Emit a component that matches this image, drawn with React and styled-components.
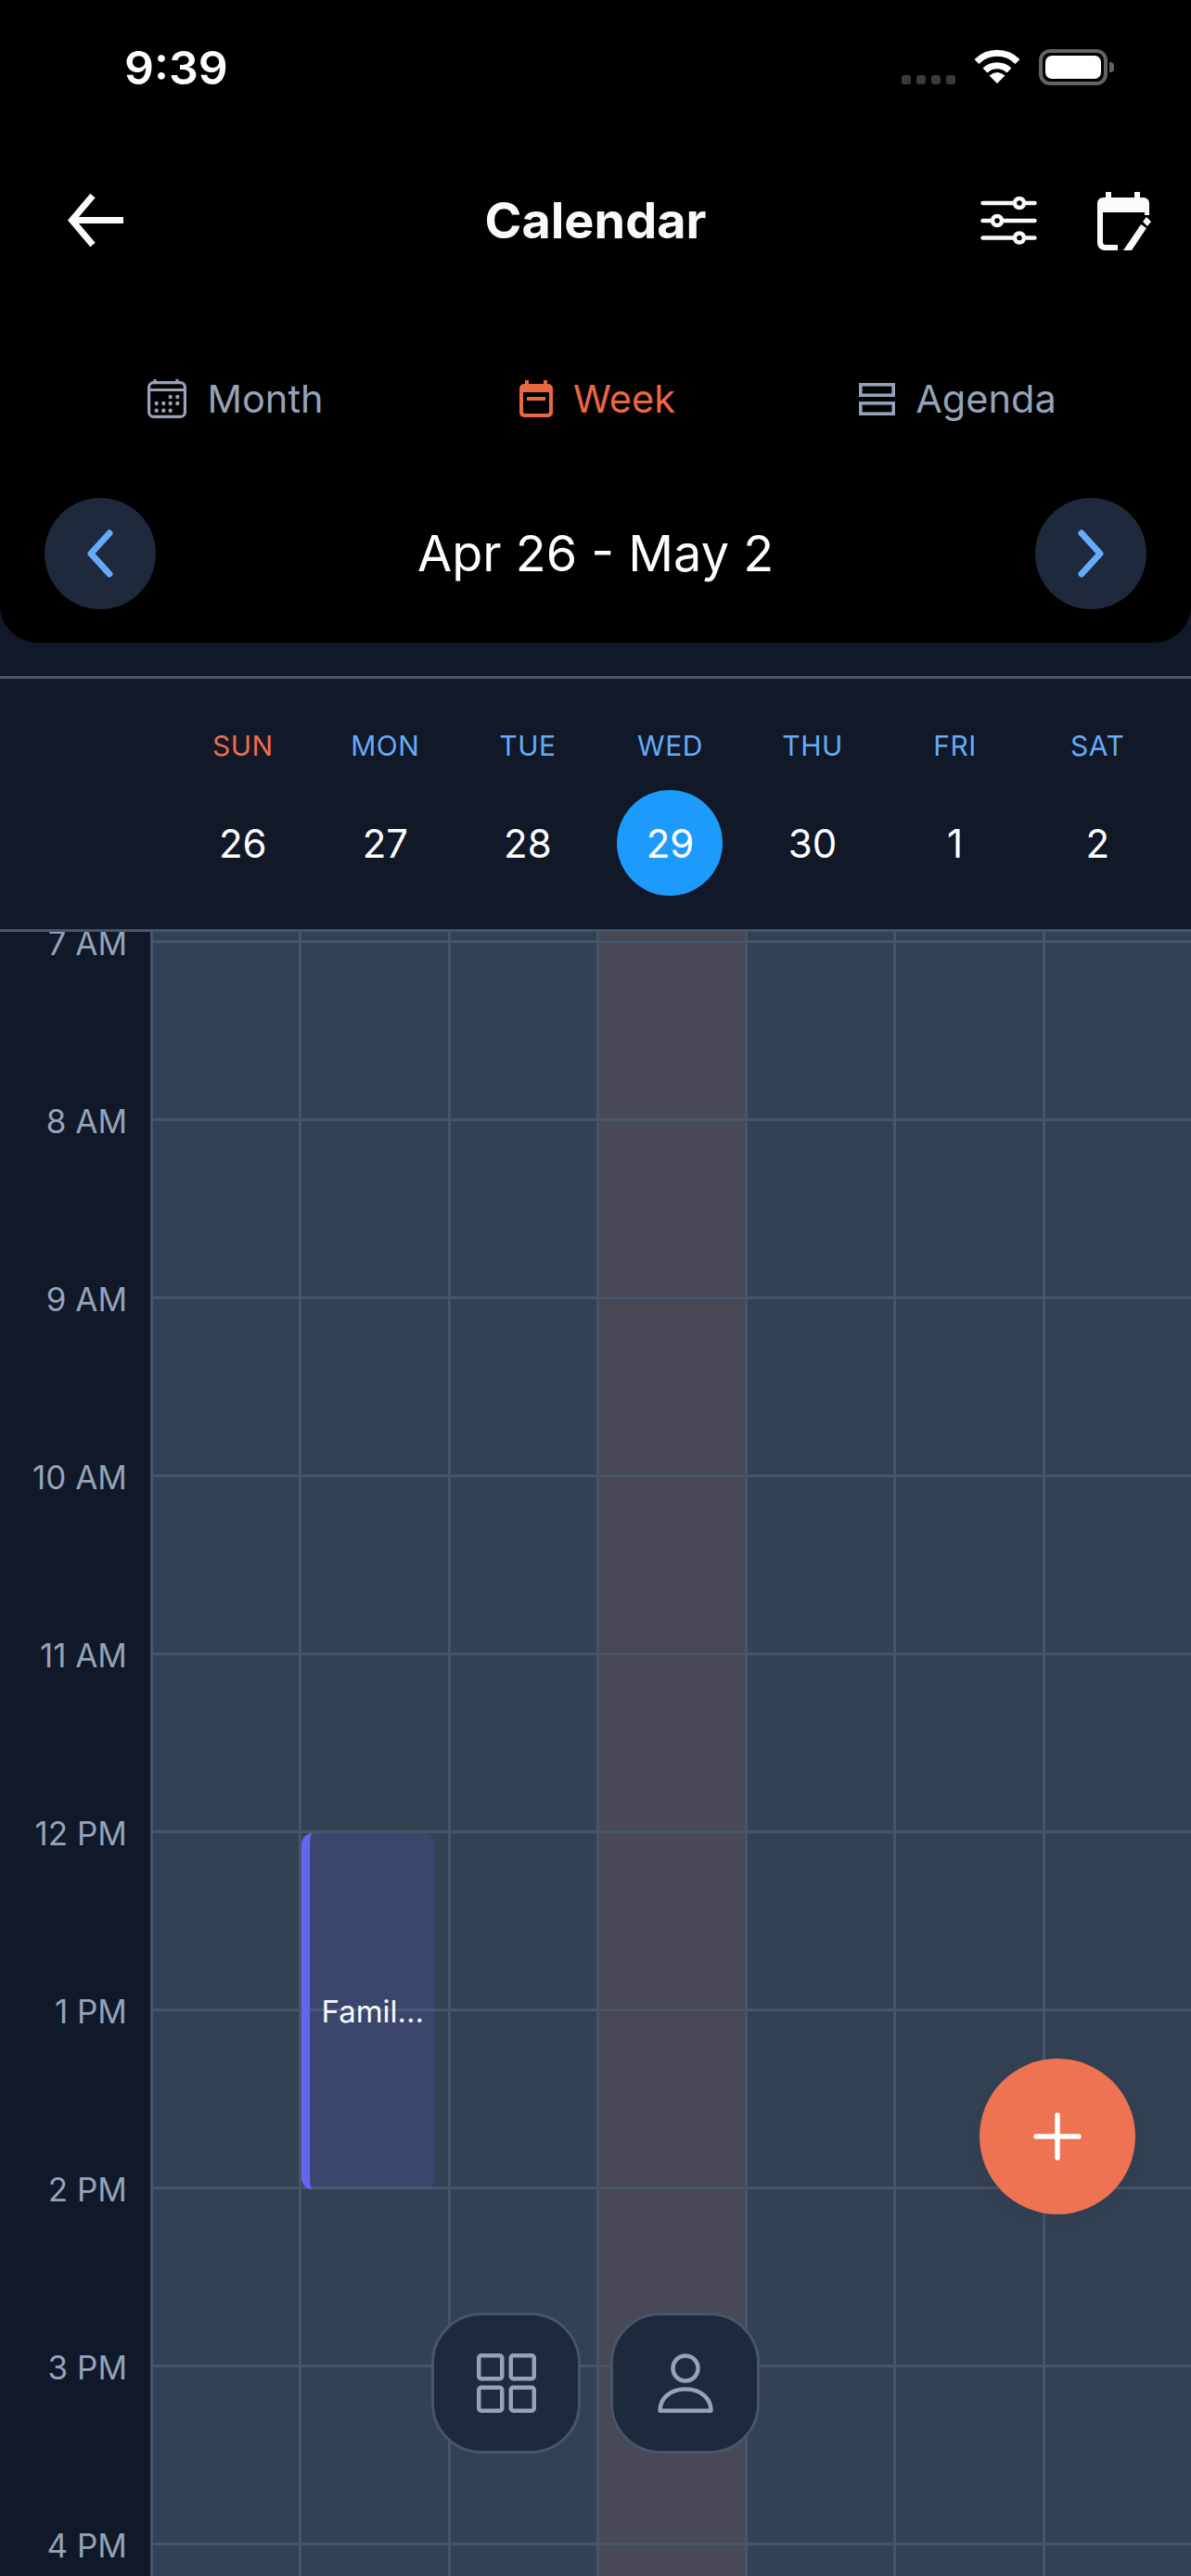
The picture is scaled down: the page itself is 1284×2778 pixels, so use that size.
import React from "react";
import styled, { createGlobalStyle } from "styled-components";

const Global = createGlobalStyle`
  html, body { margin: 0; padding: 0; background: #111827; }
  body { font-family: Inter, "Noto Sans", sans-serif; -webkit-font-smoothing: antialiased; }
  * { box-sizing: border-box; }
`;

const Page = styled.div`
  position: relative;
  width: 1284px;
  height: 2778px;
  overflow: hidden;
  display: flex;
  flex-direction: column;
  background: #111827;
`;

const Header = styled.header`
  background: #000;
  border-radius: 0 0 40px 40px;
  padding-bottom: 36px;
  flex: none;
`;

const StatusBar = styled.div`
  height: 146px;
  display: flex;
  justify-content: space-between;
  padding: 0 90px 0 134px;
  align-items: flex-start;
`;

const Clock = styled.span`
  margin-top: 44px;
  font-size: 50px;
  line-height: 58px;
  font-weight: 600;
  color: #fff;
`;

const StatusIcons = styled.div`
  margin-top: 53px;
  display: flex;
  align-items: flex-start;
`;

const SignalDots = styled.div`
  display: flex;
  gap: 6px;
  margin: 28px 20px 0 0;
`;

const SignalDot = styled.i`
  display: block;
  width: 10px;
  height: 10px;
  border-radius: 3px;
  background: #3a3a3c;
`;

const Battery = styled.div`
  position: relative;
  width: 74px;
  height: 39px;
  margin-left: 20px;
  border: 4px solid #636366;
  border-radius: 12px;
  padding: 3px;
  &::after {
    content: "";
    position: absolute;
    right: -11px;
    top: 10px;
    width: 5px;
    height: 11px;
    border-radius: 0 4px 4px 0;
    background: #636366;
  }
`;

const BatteryFill = styled.div`
  width: 100%;
  height: 100%;
  border-radius: 7px;
  background: #fff;
`;

const NavBar = styled.nav`
  margin-top: 46px;
  height: 92px;
  display: grid;
  grid-template-columns: 1fr auto 1fr;
  align-items: center;
  padding: 0 43px;
`;

const BackButton = styled.div`
  padding-left: 30px;
`;

const Title = styled.h1`
  margin: 0;
  font-size: 54px;
  line-height: 64px;
  font-weight: 700;
  color: #f8fafc;
`;

const NavActions = styled.div`
  display: flex;
  justify-content: flex-end;
  align-items: center;
  gap: 65px;
`;

const Tabs = styled.div`
  margin-top: 101px;
  height: 90px;
  display: grid;
  grid-template-columns: 390px 390px 387px;
  padding-left: 59px;
`;

const Tab = styled.div`
  display: flex;
  align-items: center;
  justify-content: center;
  gap: 22px;
  font-size: 41.5px;
  color: ${(p) => (p.$active ? "#ea6840" : "#94a3b8")};
`;

const DateRow = styled.div`
  margin-top: 62px;
  display: flex;
  align-items: center;
  justify-content: space-between;
  padding: 0 48px;
`;

const RoundButton = styled.button`
  width: 120px;
  height: 120px;
  border: 0;
  padding: 0;
  border-radius: 50%;
  background: #1e293b;
  display: flex;
  align-items: center;
  justify-content: center;
`;

const DateLabel = styled.span`
  font-size: 54px;
  line-height: 64px;
  color: #fff;
`;

const Divider = styled.div`
  flex: none;
  height: 3px;
  margin-top: 36px;
  background: #475569;
`;

const DayHeader = styled.div`
  flex: none;
  display: grid;
  grid-template-columns: repeat(7, 1fr);
  padding: 50px 24px 36px 185px;
  border-bottom: 3px solid #475569;
`;

const DayCell = styled.div`
  display: flex;
  flex-direction: column;
  align-items: center;
  gap: 26px;
`;

const WeekDay = styled.span`
  font-size: 30px;
  line-height: 44px;
  letter-spacing: 0.5px;
  color: ${(p) => (p.$sunday ? "#ee6c4d" : "#66abf7")};
`;

const DayNumber = styled.span`
  width: 114px;
  height: 114px;
  border-radius: 50%;
  display: flex;
  align-items: center;
  justify-content: center;
  font-size: 42px;
  color: #fff;
  background: ${(p) => (p.$today ? "#1d9bfd" : "transparent")};
`;

const Schedule = styled.div`
  flex: 1;
  min-height: 0;
  overflow: hidden;
  display: grid;
  grid-template-columns: 162px repeat(7, 1fr);
`;

const TimeGutter = styled.div`
  margin-top: -84px;
  display: flex;
  flex-direction: column;
`;

const TimeLabel = styled.div`
  flex: none;
  height: 192px;
  display: flex;
  align-items: center;
  justify-content: flex-end;
  padding-right: 25px;
  font-size: 35px;
  color: #94a3b8;
`;

const DayColumn = styled.div`
  position: relative;
  display: flex;
  flex-direction: column;
  padding-top: 9px;
  border-left: 3px solid #475569;
  background: ${(p) => (p.$today ? "#494856" : "#334155")};
`;

const HourCell = styled.div`
  flex: none;
  height: 192px;
  border-top: 3px solid #475569;
`;

const EventCard = styled.div`
  position: absolute;
  left: 0;
  top: 972px;
  width: 144px;
  height: 384px;
  border-left: 9px solid #6366f1;
  border-radius: 12px;
  background: rgba(99, 102, 241, 0.15);
  display: flex;
  align-items: center;
  justify-content: center;
  font-size: 33px;
  color: #f8fafc;
`;

const Fab = styled.button`
  position: absolute;
  left: 1056px;
  top: 2220px;
  width: 168px;
  height: 168px;
  border: 0;
  padding: 0;
  border-radius: 50%;
  background: #ed7352;
  box-shadow: 0 6px 24px rgba(17, 24, 39, 0.08);
  display: flex;
  align-items: center;
  justify-content: center;
`;

const BottomDock = styled.div`
  position: absolute;
  left: 0;
  right: 0;
  top: 2494px;
  display: flex;
  justify-content: center;
  gap: 32px;
`;

const DockButton = styled.button`
  width: 161px;
  height: 152px;
  padding: 0;
  border: 3px solid #475569;
  border-radius: 54px;
  background: #1e293b;
  display: flex;
  align-items: center;
  justify-content: center;
`;

const Wifi = () => (
  <svg width="50" height="37" viewBox="0 0 50 37" fill="none" stroke="#fff" strokeWidth="7">
    <path d="M3 13.5A31 31 0 0 1 47 13.5" />
    <path d="M12 23A18.500 18.500 0 0 1 38 23" />
    <path d="M25 37L16.500 28.500Q25 21.500 33.500 28.500Z" fill="#fff" stroke="none" />
  </svg>
);

const BackIcon = () => (
  <svg width="60" height="60" viewBox="0 0 60 60" fill="none" stroke="#f8fafc" strokeWidth="7" style={{ display: "block" }}>
    <path d="M60 29.500H5" />
    <path d="M27 3L4.500 29.500L27 56" />
  </svg>
);

const SlidersIcon = () => (
  <svg width="61" height="52" viewBox="0 0 61 52" fill="none" stroke="#f8fafc" strokeWidth="4.500" strokeLinecap="round" style={{ display: "block" }}>
    <path d="M2.500 7H58.500M2.500 26H58.500M2.500 44.500H58.500" />
    <circle cx="42" cy="7" r="5" fill="#000" />
    <circle cx="18" cy="26" r="5" fill="#000" />
    <circle cx="42" cy="44.500" r="5" fill="#000" />
  </svg>
);

const CalendarEditIcon = () => (
  <svg width="58" height="63" viewBox="0 0 58 63" style={{ display: "block" }}>
    <path
      fill="#f8fafc"
      d="M9 0H15V6H40V0H46V6H50A6 6 0 0 1 56 12V25H51V22H6V54A3 3 0 0 0 9 57H22V63H8A8 8 0 0 1 0 55V12A6 6 0 0 1 6 6H9Z"
    />
    <path fill="#f8fafc" d="M28 63L47 35L53 39L37 63Z" />
    <path fill="#f8fafc" d="M49 32L53 27L58 32L54 37Z" />
  </svg>
);

const MonthIcon = () => (
  <svg width="42" height="42" viewBox="0 0 42 42" fill="none" stroke="#94a3b8" strokeWidth="3.200">
    <rect x="1.600" y="3.600" width="38.800" height="36.800" rx="5" />
    <path d="M8 0V4M32 0V4M2 11.500H40" />
    <g fill="#94a3b8" stroke="none">
      <circle cx="24.700" cy="19" r="2.200" />
      <circle cx="32.300" cy="19" r="2.200" />
      <circle cx="9.700" cy="26" r="2.200" />
      <circle cx="17.300" cy="26" r="2.200" />
      <circle cx="24.700" cy="26" r="2.200" />
      <circle cx="32.300" cy="26" r="2.200" />
      <circle cx="9.700" cy="33.700" r="2.200" />
      <circle cx="17.300" cy="33.700" r="2.200" />
      <circle cx="24.700" cy="33.700" r="2.200" />
    </g>
  </svg>
);

const WeekIcon = () => (
  <svg width="36" height="40" viewBox="0 0 36 40" fill="#ea6840">
    <rect x="6" y="0" width="4" height="6" />
    <rect x="26" y="0" width="4" height="6" />
    <path fillRule="evenodd" d="M5 4H31A5 5 0 0 1 36 9V35A5 5 0 0 1 31 40H5A5 5 0 0 1 0 35V9A5 5 0 0 1 5 4ZM4 13V34A2 2 0 0 0 6 36H30A2 2 0 0 0 32 34V13Z" />
    <rect x="8" y="18" width="20" height="4" />
  </svg>
);

const AgendaIcon = () => (
  <svg width="39" height="35" viewBox="0 0 39 35" fill="none" stroke="#94a3b8" strokeWidth="3.600">
    <rect x="1.800" y="1.800" width="35.400" height="11.400" />
    <rect x="1.800" y="21.800" width="35.400" height="11.400" />
  </svg>
);

const ChevronIcon = ({ flip }) => (
  <svg width="30" height="52" viewBox="0 0 30 52" fill="none" stroke="#66abfb" strokeWidth="7" strokeLinecap="round" strokeLinejoin="round" style={flip ? { transform: "scaleX(-1)" } : undefined}>
    <path d="M25 4L5 26L25 48" />
  </svg>
);

const PlusIcon = () => (
  <svg width="52" height="52" viewBox="0 0 52 52" fill="none" stroke="#fff" strokeWidth="5.500" strokeLinecap="round">
    <path d="M26 3V49M3 26H49" />
  </svg>
);

const GridIcon = () => (
  <svg width="64" height="64" viewBox="0 0 64 64" fill="none" stroke="#94a3b8" strokeWidth="4.500">
    <rect x="2.250" y="2.250" width="25" height="25" rx="2.500" />
    <rect x="36.750" y="2.250" width="25" height="25" rx="2.500" />
    <rect x="2.250" y="36.750" width="25" height="25" rx="2.500" />
    <rect x="36.750" y="36.750" width="25" height="25" rx="2.500" />
  </svg>
);

const PersonIcon = () => (
  <svg width="60" height="64" viewBox="0 0 60 64" fill="none" stroke="#94a3b8" strokeWidth="4.500" strokeLinejoin="round">
    <circle cx="30" cy="16" r="13.500" />
    <path d="M2.500 61.700C2.500 48 14 38.500 30 38.500C46 38.500 57.500 48 57.500 61.700Z" />
  </svg>
);

const HOURS = ["7 AM", "8 AM", "9 AM", "10 AM", "11 AM", "12 PM", "1 PM", "2 PM", "3 PM", "4 PM"];
const DAYS = [
  ["SUN", "26"],
  ["MON", "27"],
  ["TUE", "28"],
  ["WED", "29"],
  ["THU", "30"],
  ["FRI", "1"],
  ["SAT", "2"],
];
const ROWS = Array.from({ length: 10 });

export default function App() {
  return (
    <Page>
      <Global />
      <Header>
        <StatusBar>
          <Clock>9:39</Clock>
          <StatusIcons>
            <SignalDots>
              <SignalDot />
              <SignalDot />
              <SignalDot />
              <SignalDot />
            </SignalDots>
            <Wifi />
            <Battery>
              <BatteryFill />
            </Battery>
          </StatusIcons>
        </StatusBar>
        <NavBar>
          <BackButton>
            <BackIcon />
          </BackButton>
          <Title>Calendar</Title>
          <NavActions>
            <SlidersIcon />
            <CalendarEditIcon />
          </NavActions>
        </NavBar>
        <Tabs>
          <Tab>
            <MonthIcon />
            Month
          </Tab>
          <Tab $active>
            <WeekIcon />
            Week
          </Tab>
          <Tab>
            <AgendaIcon />
            Agenda
          </Tab>
        </Tabs>
        <DateRow>
          <RoundButton>
            <ChevronIcon />
          </RoundButton>
          <DateLabel>Apr 26 - May 2</DateLabel>
          <RoundButton>
            <ChevronIcon flip />
          </RoundButton>
        </DateRow>
      </Header>
      <Divider />
      <DayHeader>
        {DAYS.map(([name, num]) => (
          <DayCell key={name}>
            <WeekDay $sunday={name === "SUN"}>{name}</WeekDay>
            <DayNumber $today={name === "WED"}>{num}</DayNumber>
          </DayCell>
        ))}
      </DayHeader>
      <Schedule>
        <TimeGutter>
          {HOURS.map((h) => (
            <TimeLabel key={h}>{h}</TimeLabel>
          ))}
        </TimeGutter>
        {DAYS.map(([name]) => (
          <DayColumn key={name} $today={name === "WED"}>
            {ROWS.map((_, i) => (
              <HourCell key={i} />
            ))}
            {name === "MON" && <EventCard>Famil...</EventCard>}
          </DayColumn>
        ))}
      </Schedule>
      <Fab>
        <PlusIcon />
      </Fab>
      <BottomDock>
        <DockButton>
          <GridIcon />
        </DockButton>
        <DockButton>
          <PersonIcon />
        </DockButton>
      </BottomDock>
    </Page>
  );
}
